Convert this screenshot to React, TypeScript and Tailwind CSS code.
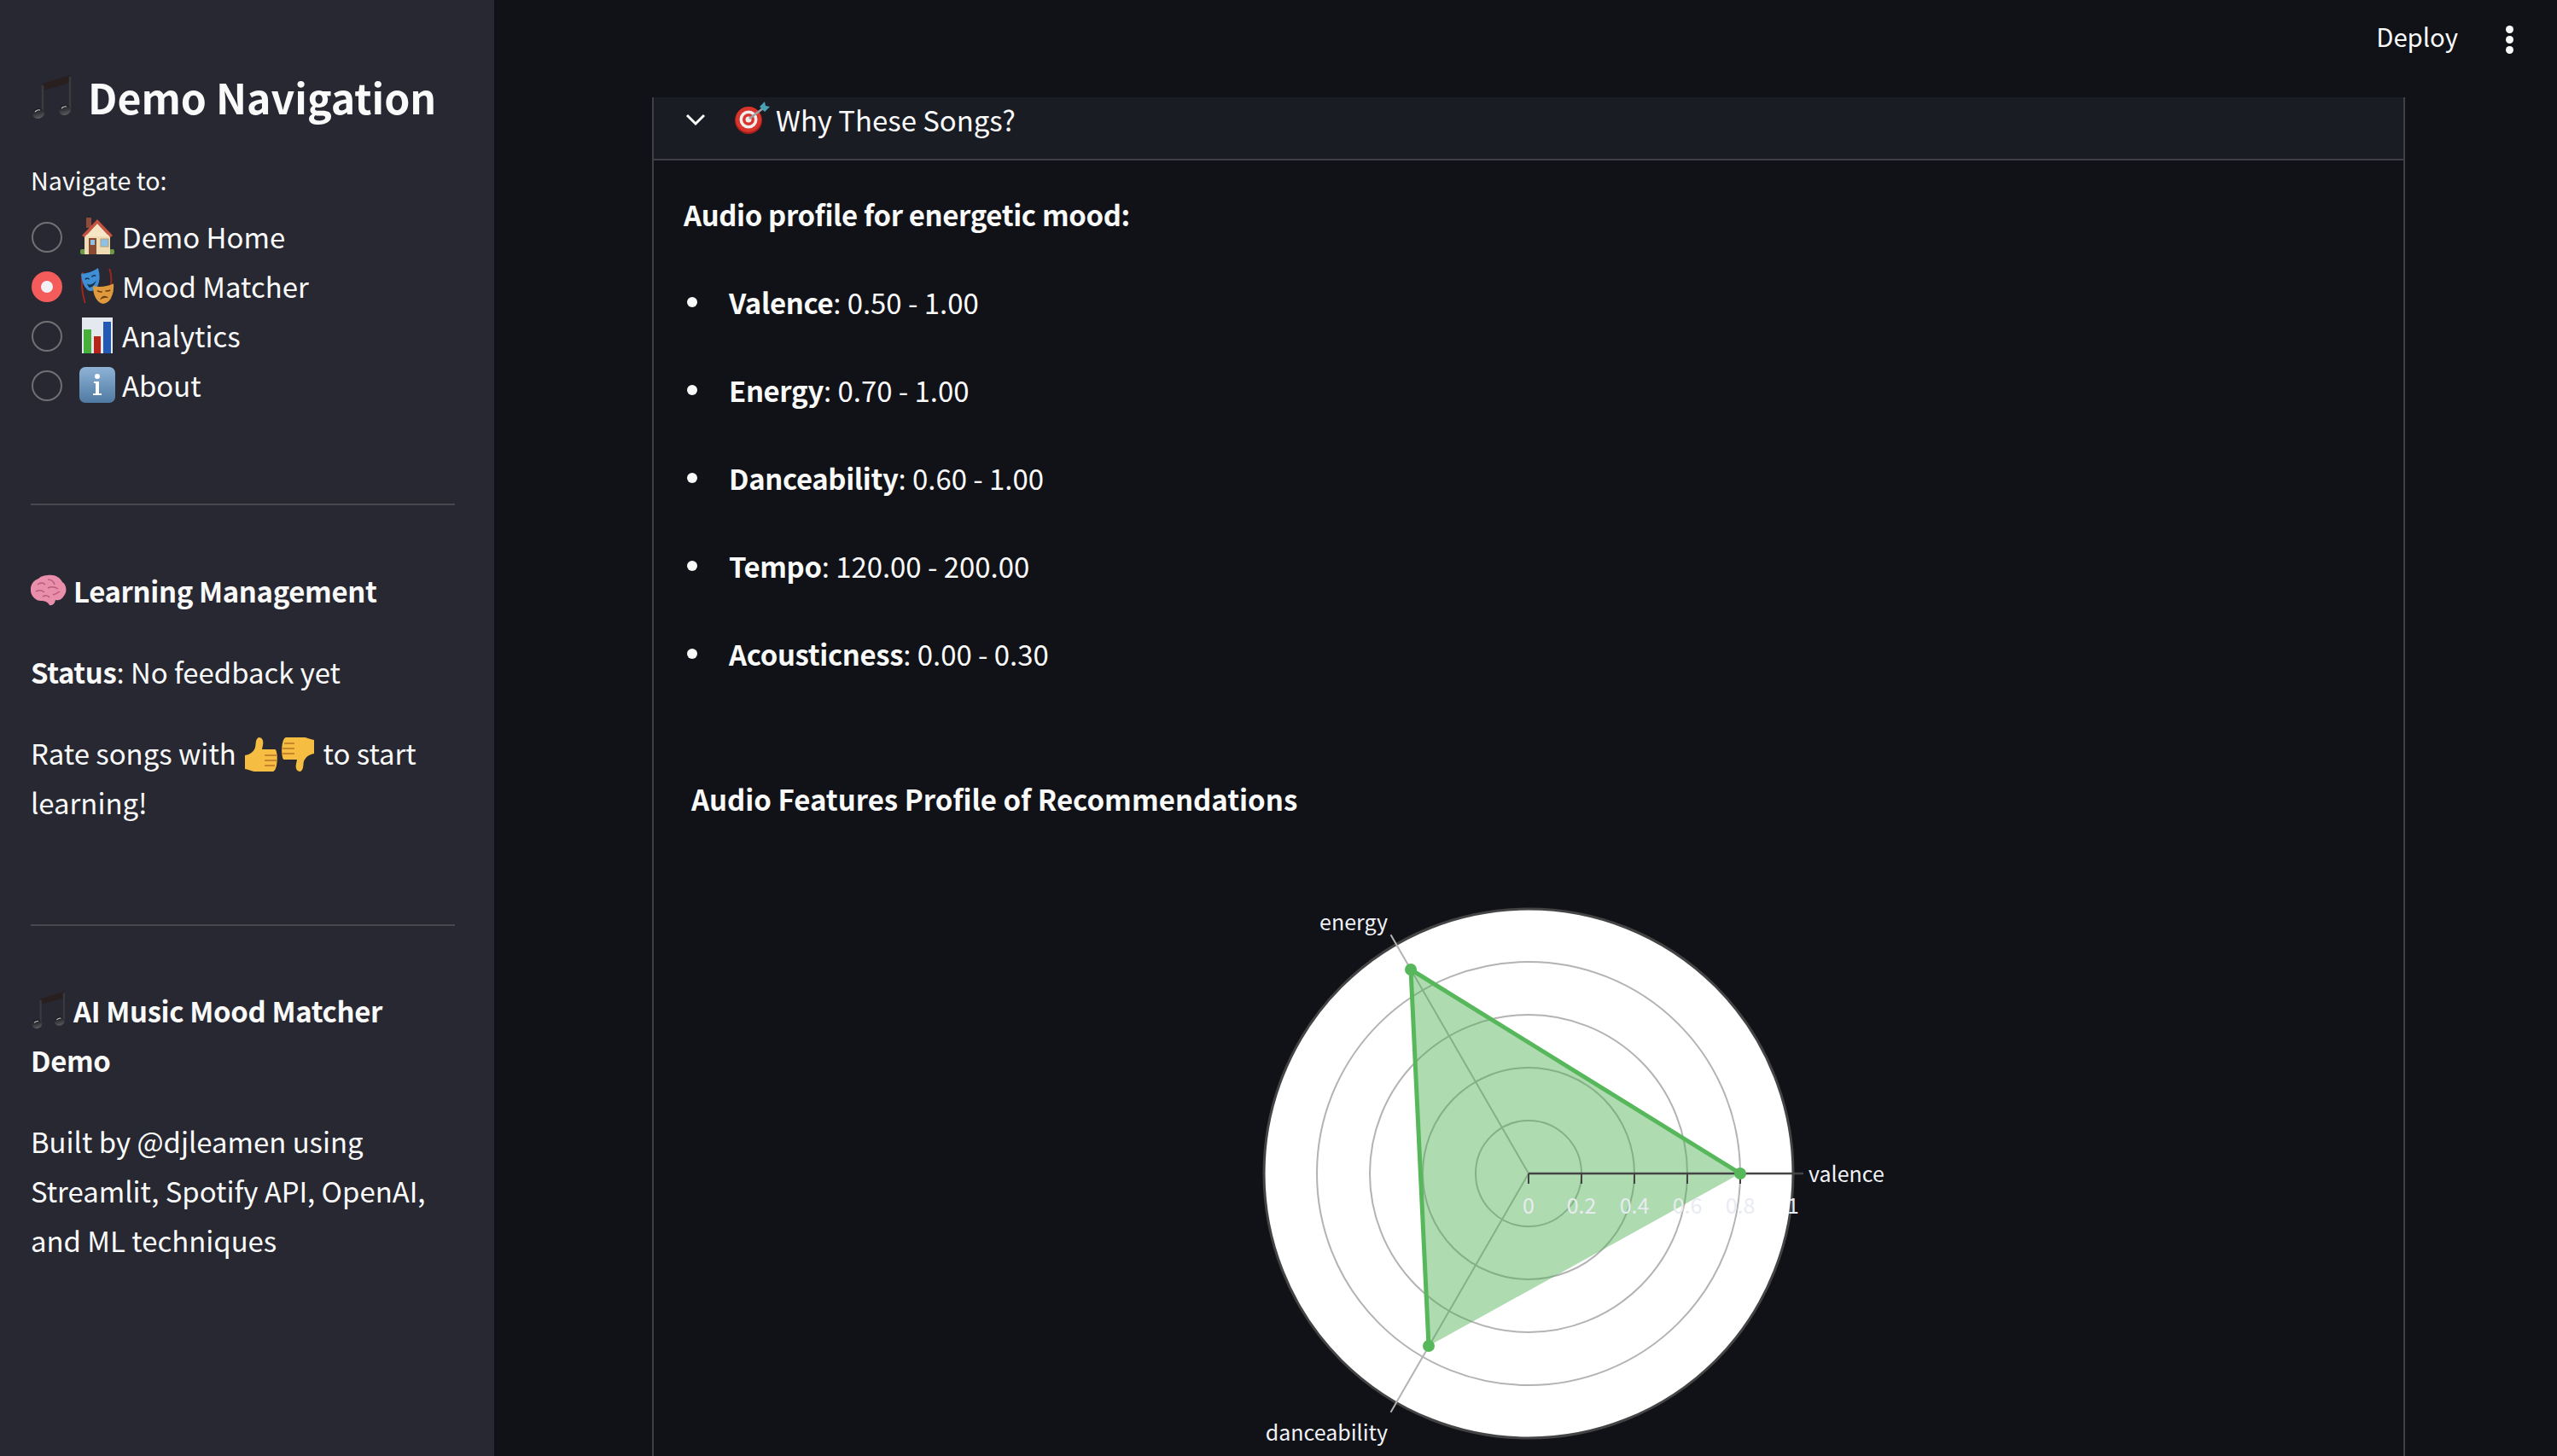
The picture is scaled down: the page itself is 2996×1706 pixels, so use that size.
import React from 'react';

const Notes = ({ className }: { className: string }) => (
  <svg viewBox="0 0 46 54" className={className}>
    <defs>
      <linearGradient id="noteBall" x1="0" y1="0" x2="0" y2="1">
        <stop offset="0" stopColor="#15151a" />
        <stop offset="1" stopColor="#5a5c60" />
      </linearGradient>
    </defs>
    <path d="M12 12 L44 2 V11 L12 20 Z" fill="#2a1f1f" />
    <path d="M12 14 V45 M44 4 V41" stroke="#3a3b40" strokeWidth="2.5" fill="none" />
    <ellipse cx="7" cy="47" rx="7" ry="6" fill="url(#noteBall)" transform="rotate(-15 7 47)" />
    <ellipse cx="38" cy="43" rx="7" ry="6" fill="url(#noteBall)" transform="rotate(-15 38 43)" />
    <path d="M3 45 Q6 42 9 43" stroke="#c8c8cc" strokeWidth="1.2" fill="none" />
    <path d="M34 41 Q37 38 40 39" stroke="#c8c8cc" strokeWidth="1.2" fill="none" />
  </svg>
);

const House = () => (
  <svg viewBox="0 0 40 44" className="w-[40px] h-[44px] shrink-0">
    <rect x="7" y="0" width="6" height="12" fill="#8f4a3c" />
    <rect x="0" y="37" width="6" height="6" rx="2" fill="#6a9a45" />
    <rect x="34" y="37" width="6" height="6" rx="2" fill="#6a9a45" />
    <path d="M5 20 H35 V43 H5 Z" fill="#f0dcb4" />
    <path d="M20 2 L38 21 L35 23 L20 7 L5 23 L2 21 Z" fill="#c9513f" />
    <path d="M20 7 L34 22 H6 Z" fill="#f6e6c6" />
    <rect x="10" y="24" width="9" height="19" fill="#8a4b32" />
    <rect x="12" y="26" width="5" height="6" fill="#8cc2e8" />
    <rect x="24" y="25" width="9" height="9" fill="#8cc2e8" stroke="#b89c70" strokeWidth="1" />
  </svg>
);

const Masks = () => (
  <svg viewBox="0 0 42 46" className="w-[40px] h-[44px] shrink-0">
    <path d="M3 6 Q0 24 6 44 M36 2 Q40 14 37 24" stroke="#a3261d" strokeWidth="2" fill="none" />
    <path d="M1 8 Q12 8 22 1 Q26 14 21 24 Q15 32 9 28 Q2 22 1 8 Z" fill="#3f8fd6" />
    <path d="M6 15 q3 -3 5 0 M14 12 q3 -3 5 -1" stroke="#12324f" strokeWidth="1.6" fill="none" />
    <path d="M8 20 Q14 24 20 16 Q17 25 11 25 Z" fill="#12324f" />
    <path d="M16 23 Q28 26 41 20 Q42 34 35 42 Q28 48 22 42 Q15 34 16 23 Z" fill="#e09a3e" />
    <path d="M21 29 q3 2 6 1 M31 29 q3 1 6 -1" stroke="#6c3b10" strokeWidth="1.6" fill="none" />
    <path d="M24 40 Q29 32 35 38 Q30 36 24 40 Z" fill="#6c3b10" />
  </svg>
);

const Bars = () => (
  <svg viewBox="0 0 36 42" className="w-[36px] h-[42px] shrink-0">
    <rect width="36" height="42" fill="#e4e9ef" />
    <rect x="2" y="14" width="9" height="28" fill="#46b03a" />
    <rect x="14" y="22" width="8" height="20" fill="#b5261a" />
    <rect x="25" y="5" width="9" height="37" fill="#2359b5" />
  </svg>
);

const Info = () => (
  <svg viewBox="0 0 42 42" className="w-[42px] h-[42px] shrink-0">
    <defs>
      <linearGradient id="infoBg" x1="0" y1="0" x2="0" y2="1">
        <stop offset="0" stopColor="#8fb3d6" />
        <stop offset="1" stopColor="#4f7aa3" />
      </linearGradient>
    </defs>
    <rect width="42" height="42" rx="7" fill="url(#infoBg)" />
    <circle cx="21" cy="11" r="3" fill="#fff" />
    <path d="M17 17 H23 V31 H26 V33 H16 V31 H19 V19 H17 Z" fill="#fff" />
  </svg>
);

const Brain = () => (
  <svg viewBox="0 0 42 38" className="w-[42px] h-[38px] shrink-0 inline-block align-[-8px]">
    <path d="M20 1 C28 0 34 3 37 9 C42 12 43 20 39 25 C36 30 32 31 29 30 C28 35 25 37 22 36 C20 32 16 31 12 31 C6 31 1 26 0 20 C-1 13 3 7 9 5 C12 2 16 1 20 1 Z" fill="#ea8fab" />
    <path d="M8 12 q5 -4 9 0 M20 6 q6 0 8 6 M6 20 q6 -3 10 1 M20 16 q6 -3 12 1 M26 24 q4 -1 8 -4 M14 26 q5 -3 8 1" stroke="#b85c7d" strokeWidth="1.5" fill="none" />
  </svg>
);

const Thumb = ({ down }: { down?: boolean }) => (
  <svg viewBox="0 0 40 42" className={`w-[40px] h-[42px] shrink-0 inline-block align-[-9px] ${down ? 'rotate-180 ml-[3px] mr-[2px]' : 'ml-[2px]'}`}>
    <path d="M17 1 C22 1 23 6 22 10 L21 15 H36 C40 15 40 40 34 41 H14 C8 41 8 39 1 38 V22 C7 21 11 18 13 13 C14 9 13 3 17 1 Z" fill="#f5bd41" />
    <path d="M24 22 H39 M24 28 H38 M24 34 H36" stroke="#c9852b" strokeWidth="2" fill="none" />
  </svg>
);

const Target = () => (
  <svg viewBox="0 0 42 38" className="w-[42px] h-[38px] shrink-0">
    <circle cx="17" cy="22" r="16" fill="#a81e1b" />
    <circle cx="17" cy="21" r="15" fill="#d8352c" />
    <circle cx="17" cy="21" r="10.5" fill="#f4eeee" />
    <circle cx="17" cy="21" r="7" fill="#d8352c" />
    <circle cx="17" cy="21" r="3.5" fill="#f4eeee" />
    <path d="M18 20 L34 8" stroke="#9aa0a6" strokeWidth="2.5" />
    <path d="M30 6 L36 0 L37 5 L42 6 L36 12 Z" fill="#4aa0b5" />
  </svg>
);

const navItems = [
  { label: 'Demo Home', icon: <House /> },
  { label: 'Mood Matcher', icon: <Masks />, active: true },
  { label: 'Analytics', icon: <Bars /> },
  { label: 'About', icon: <Info /> },
];

const profile = [
  ['Valence', '0.50 - 1.00'],
  ['Energy', '0.70 - 1.00'],
  ['Danceability', '0.60 - 1.00'],
  ['Tempo', '120.00 - 200.00'],
  ['Acousticness', '0.00 - 0.30'],
];

const RadarChart = () => {
  const ticks = ['0', '0.2', '0.4', '0.6', '0.8', '1'];
  // chart origin is 500,320 inside the svg
  return (
    <svg viewBox="0 0 1000 640" className="w-[1000px] h-[640px] block shrink-0">
      <circle cx="500" cy="320" r="310" fill="#ffffff" stroke="#444444" strokeWidth="3" />
      {[62, 124, 186, 248].map((r) => (
        <circle key={r} cx="500" cy="320" r={r} fill="none" stroke="#b3b3b3" strokeWidth="2" />
      ))}
      <path d="M500 320 L338.500 40.300 M500 320 L338.500 599.700" stroke="#b3b3b3" strokeWidth="2" />
      <path d="M748 320 L362 81 L383 522 Z" fill="#4caf50" fillOpacity="0.45" />
      <path d="M748 320 L362 81 L383 522" fill="none" stroke="#57b85b" strokeWidth="5" />
      <path d="M500 320 H822" stroke="#444444" strokeWidth="2.500" />
      {[500, 562, 624, 686, 748, 810].map((x) => (
        <path key={x} d={`M${x} 320 V332`} stroke="#444444" strokeWidth="2" />
      ))}
      <circle cx="748" cy="320" r="7" fill="#57b85b" />
      <circle cx="362" cy="81" r="7" fill="#57b85b" />
      <circle cx="383" cy="522" r="7" fill="#57b85b" />
      {ticks.map((t, i) => (
        <text key={t} x={500 + i * 62} y="367" textAnchor="middle" fontSize="25" fill="#e9ebf2">{t}</text>
      ))}
      <text x="828" y="330" fontSize="25" fill="#f0f1f6">valence</text>
      <text x="335" y="35" textAnchor="end" fontSize="25" fill="#f0f1f6">energy</text>
      <text x="335" y="633" textAnchor="end" fontSize="25" fill="#f0f1f6">danceability</text>
    </svg>
  );
};

const App = () => {
  return (
    <div className="w-[2996px] h-[1706px] overflow-hidden flex bg-[#101217] text-[#fafafa] font-['Noto_Sans_CJK_SC','Noto_Sans',sans-serif] text-[32.900px] leading-[58px]">
      <aside className="w-[579px] shrink-0 bg-[#272831] pl-[36px] pr-[46px] pt-[84px]">
        <h2 className="flex items-center gap-[19px] h-[58px] text-[48.200px] font-bold whitespace-nowrap">
          <Notes className="w-[46px] h-[54px] shrink-0 ml-[2px]" />
          <span>Demo Navigation</span>
        </h2>
        <div className="mt-[49px] text-[28.700px] leading-[40px]">Navigate to:</div>
        <div className="mt-[17px] flex flex-col">
          {navItems.map((item) => (
            <div key={item.label} className="flex items-center h-[58px]">
              {item.active ? (
                <span className="ml-[1px] mt-[2px] w-[36px] h-[36px] rounded-full bg-[#f45b5b] flex items-center justify-center shrink-0">
                  <span className="w-[14px] h-[14px] rounded-full bg-[#f0f2f6]" />
                </span>
              ) : (
                <span className="ml-[1px] mt-[2px] w-[36px] h-[36px] rounded-full border-2 border-[#6f7076] shrink-0" />
              )}
              <span className="ml-[20px] w-[42px] flex justify-center shrink-0">{item.icon}</span>
              <span className="ml-[8px]">{item.label}</span>
            </div>
          ))}
        </div>
        <hr className="mt-[110px] border-0 h-[2px] bg-[#46474f]" />
        <div className="mt-[71px] h-[58px] font-semibold flex items-center gap-[8px] tracking-[-0.350px]">
          <Brain />
          <span>Learning Management</span>
        </div>
        <p className="mt-[37px]"><b className="font-semibold tracking-[-0.350px]">Status</b>: No feedback yet</p>
        <p className="mt-[37px]">
          Rate songs with <Thumb /><Thumb down /> to start learning!
        </p>
        <hr className="mt-[114px] border-0 h-[2px] bg-[#46474f]" />
        <p className="mt-[70px] font-semibold tracking-[-0.350px]">
          <Notes className="w-[42px] h-[46px] inline-block align-[-8px] mr-[8px]" />
          AI Music Mood Matcher Demo
        </p>
        <p className="mt-[37px]">Built by @djleamen using Streamlit, Spotify API, OpenAI, and ML techniques</p>
      </aside>
      <main className="flex-1 min-w-0 flex flex-col">
        <header className="h-[114px] pt-[13px] flex items-start justify-end shrink-0">
          <span className="leading-[58px] text-[29.300px]">Deploy</span>
          <span className="ml-[56px] mr-[51px] mt-[17px] flex flex-col gap-[3px]">
            <i className="block w-[9px] h-[9px] rounded-full bg-[#fafafa]" />
            <i className="block w-[9px] h-[9px] rounded-full bg-[#fafafa]" />
            <i className="block w-[9px] h-[9px] rounded-full bg-[#fafafa]" />
          </span>
        </header>
        <section className="flex-1 ml-[185px] w-[2054px] border-x-2 border-[#3f4046]">
          <div className="h-[74px] bg-[#1a1c24] border-b-2 border-[#3f4046] flex items-start pl-[37px]">
            <svg viewBox="0 0 24 24" className="w-[24px] h-[24px] mt-[14px] shrink-0" fill="none" stroke="#fafafa" strokeWidth="3">
              <path d="M2 7 L12 17 L22 7" />
            </svg>
            <span className="ml-[33px] mt-[5px]"><Target /></span>
            <span className="ml-[7px] leading-[52px]">Why These Songs?</span>
          </div>
          <div className="pl-[35px]">
            <p className="mt-[34px] font-semibold tracking-[-0.350px]">Audio profile for energetic mood:</p>
            <ul className="mt-[45px] flex flex-col gap-[45px]">
              {profile.map(([name, value]) => (
                <li key={name} className="flex items-center">
                  <span className="w-[12px] h-[12px] rounded-full bg-[#fafafa] ml-[4px] mr-[37px]" />
                  <span><b className="font-semibold tracking-[-0.350px]">{name}</b>: {value}</span>
                </li>
              ))}
            </ul>
            <h3 className="mt-[112px] ml-[9px] font-semibold text-[33px]">Audio Features Profile of Recommendations</h3>
          </div>
          <div className="flex justify-center mt-[90px]">
            <RadarChart />
          </div>
        </section>
      </main>
    </div>
  );
};

export default App;
